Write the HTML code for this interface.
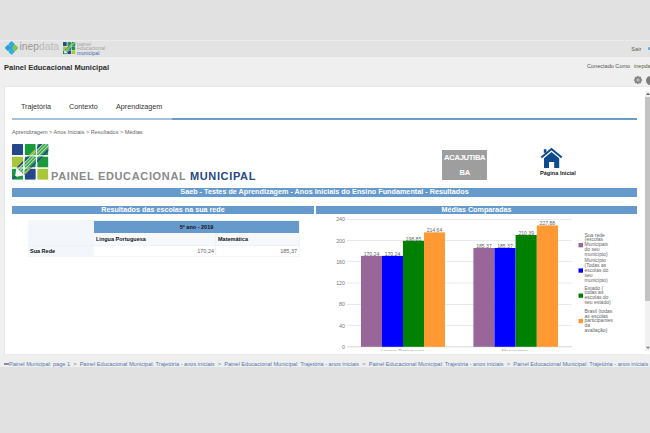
<!DOCTYPE html>
<html><head><meta charset="utf-8">
<style>
*{margin:0;padding:0;box-sizing:border-box}
html,body{width:650px;height:433px;overflow:hidden;background:#e1e1e1;font-family:"Liberation Sans",sans-serif;position:relative}
.abs{position:absolute}
.t{position:absolute;white-space:nowrap;line-height:1}
#topline{left:0;top:40px;width:650px;height:1px;background:#ececec}
#hdr{left:0;top:41px;width:650px;height:16px;background:#e3e3e3}
#title{left:0;top:57px;width:650px;height:310px;background:#efefef}
#titleb{display:none}
#content{left:3.8px;top:85.8px;width:648px;height:269px;background:#fff;border-left:1.2px solid #e4e8ed;border-top:1.2px solid #e4e8ed}
#bottom{left:0;top:354px;width:650px;height:13px;background:#efefef;overflow:hidden}
.bar{position:absolute;background:#6699cc;color:#fff;font-weight:bold;text-align:center;white-space:nowrap;overflow:hidden}
</style></head><body>
<div class="abs" id="topline"></div>
<div class="abs" id="hdr"></div>
<div class="abs" id="title"></div>
<div class="abs" id="titleb"></div>
<div class="abs" id="content"></div>
<div class="abs" id="bottom"></div>

<!-- header logos -->
<svg class="abs" style="left:0;top:36px" width="24" height="24" viewBox="0 0 24 24">
  <g transform="rotate(45 11.6 11.9)">
    <rect x="9" y="9" width="5" height="5" fill="#2ea9dd"/>
    <rect x="6.6" y="6.9" width="4.9" height="4.9" rx="0.9" fill="#2ea9dd"/>
    <rect x="11.7" y="12" width="4.9" height="4.9" rx="0.9" fill="#31aee2"/>
    <rect x="6.6" y="12" width="4.9" height="4.9" rx="0.9" fill="#28a3d8"/>
    <rect x="11.7" y="6.9" width="4.9" height="4.9" rx="0.9" fill="#80c548"/>
  </g>
</svg>
<div class="t" style="left:19.5px;top:41.5px;font-size:10.2px;color:#969696;letter-spacing:0.05px">inep<span style="color:#bababa">data</span></div>
<svg class="abs" style="left:63px;top:42px" width="12.7" height="12.5" viewBox="0 0 37 36">
  <defs>
    <pattern id="st2" width="2.4" height="2.4" patternUnits="userSpaceOnUse" patternTransform="rotate(45)">
      <rect width="2.4" height="2.4" fill="#2a9f46"/><rect width="1" height="2.4" fill="#c5e6bd"/>
    </pattern>
    <clipPath id="cells2">
      <rect x="0" y="0" width="11.2" height="11.2" rx="1"/><rect x="12.6" y="0" width="11.2" height="11.2" rx="1"/><rect x="25.2" y="0" width="11.2" height="11.2" rx="1"/>
      <rect x="0" y="12.4" width="11.2" height="11.2" rx="1"/><rect x="12.6" y="12.4" width="11.2" height="11.2" rx="1"/><rect x="25.2" y="12.4" width="11.2" height="11.2" rx="1"/>
      <rect x="0" y="24.6" width="11.2" height="11.2" rx="1"/><rect x="12.6" y="24.6" width="11.2" height="11.2" rx="1"/><rect x="25.2" y="24.6" width="11.2" height="11.2" rx="1"/>
    </clipPath>
    <clipPath id="c12b"><rect x="12.6" y="0" width="11.2" height="11.2"/></clipPath>
    <clipPath id="c32b"><rect x="12.6" y="24.6" width="11.2" height="11.2"/></clipPath>
  </defs>
  <g clip-path="url(#cells2)">
    <rect x="0" y="0" width="11.2" height="11.2" fill="#26468a"/>
    <rect x="12.6" y="0" width="11.2" height="11.2" fill="#1a9a3c"/>
    <rect x="25.2" y="0" width="11.2" height="11.2" fill="#1a9a3c"/>
    <rect x="0" y="12.4" width="11.2" height="11.2" fill="#a8c83a"/>
    <rect x="12.6" y="12.4" width="11.2" height="11.2" fill="#1a9a3c"/>
    <rect x="25.2" y="12.4" width="11.2" height="11.2" fill="#1a9a3c"/>
    <rect x="0" y="24.6" width="11.2" height="11.2" fill="#1a9a3c"/>
    <rect x="12.6" y="24.6" width="11.2" height="11.2" fill="#26468a"/>
    <rect x="25.2" y="24.6" width="11.2" height="11.2" fill="#a8c83a"/>
    <polygon points="28,0 30.5,0 5.75,24.75 4.5,23.5" fill="#26468a"/>
    <polygon points="30.5,0 37,0 37,4 11,30 5.75,24.75" fill="url(#st2)"/>
    <polygon points="37,4 37,6.5 12.25,31.25 11,30" fill="#26468a"/>
    <g clip-path="url(#c12b)"><polygon points="28,0 30.5,0 5.75,24.75 4.5,23.5" fill="#a8c83a"/></g>
    <g clip-path="url(#c32b)"><polygon points="37,4 37,6.5 12.25,31.25 11,30" fill="#a8c83a"/></g>
    <polygon points="4.5,23.5 12.25,31.25 3,33" fill="#fff"/>
    <polygon points="0.5,35.5 2,31.5 5,33" fill="#26468a"/>
  </g>
</svg>
<div class="t" style="left:77px;top:41.5px;font-size:5.3px;line-height:4.6px;color:#a3a3a3">painel<br>educacional<br><span style="color:#3d6ab2">municipal</span></div>
<div class="t" style="left:631.3px;top:46.5px;font-size:5.6px;color:#5a5a5a">Sair</div>
<div class="abs" style="left:647.7px;top:46.7px;width:4px;height:3.8px;background:#5aa0ea;border-radius:1.5px"></div>

<div class="t" style="left:4px;top:63.5px;font-size:7.5px;font-weight:bold;color:#2d2d2d">Painel Educacional Municipal</div>
<div class="t" style="left:587px;top:63.5px;font-size:5.55px;color:#555">Conectado Como</div>
<div class="t" style="left:634px;top:63.5px;font-size:5.55px;color:#5d5d4a">inepdata</div>
<!-- gear -->
<svg class="abs" style="left:632.5px;top:75px" width="10" height="10" viewBox="0 0 10 10">
  <g fill="#858585"><circle cx="5" cy="5" r="3.5"/>
  <rect x="4.3" y="0.9" width="1.4" height="8.2"/><rect x="0.9" y="4.3" width="8.2" height="1.4"/>
  <rect x="4.3" y="0.9" width="1.4" height="8.2" transform="rotate(45 5 5)"/><rect x="4.3" y="0.9" width="1.4" height="8.2" transform="rotate(-45 5 5)"/></g>
  <circle cx="5" cy="5" r="1.7" fill="#b8b8b8"/>
</svg>
<div class="abs" style="left:646px;top:75.5px;width:9px;height:9px;border-radius:50%;background:#7d7d7d"></div>

<!-- scrollbar -->
<div class="abs" style="left:645px;top:91px;width:5px;height:259.5px;background:#f1f1f1"></div>
<div class="abs" style="left:645px;top:97px;width:5px;height:203.5px;background:#c3c3c3"></div>

<svg class="abs" style="left:646px;top:92px" width="4" height="4"><polygon points="0,3 2,0.8 4,3" fill="#666"/></svg>
<svg class="abs" style="left:646px;top:346px" width="4" height="4"><polygon points="0,0.8 2,3 4,0.8" fill="#777"/></svg>
<!-- tabs -->
<div class="t" style="left:21px;top:102.5px;font-size:7.2px;color:#333">Trajetória</div>
<div class="t" style="left:69px;top:102.5px;font-size:7.2px;color:#333">Contexto</div>
<div class="t" style="left:116px;top:102.5px;font-size:7.2px;color:#333">Aprendizagem</div>
<div class="abs" style="left:12px;top:118.2px;width:160px;height:2.3px;background:#a6c2db"></div>
<div class="abs" style="left:172px;top:118.2px;width:465px;height:2.3px;background:#6a9dcc"></div>
<div class="t" style="left:12px;top:130px;font-size:5.53px;color:#666">Aprendizagem &gt; Anos Iniciais &gt; Resultados &gt; Médias</div>

<!-- big logo -->
<svg class="abs" style="left:12px;top:144px" width="37" height="36" viewBox="0 0 37 36">
  <defs>
    <pattern id="st" width="2.4" height="2.4" patternUnits="userSpaceOnUse" patternTransform="rotate(45)">
      <rect width="2.4" height="2.4" fill="#2a9f46"/><rect width="1" height="2.4" fill="#c5e6bd"/>
    </pattern>
    <clipPath id="cells">
      <rect x="0" y="0" width="11.2" height="11.2" rx="1"/><rect x="12.6" y="0" width="11.2" height="11.2" rx="1"/><rect x="25.2" y="0" width="11.2" height="11.2" rx="1"/>
      <rect x="0" y="12.4" width="11.2" height="11.2" rx="1"/><rect x="12.6" y="12.4" width="11.2" height="11.2" rx="1"/><rect x="25.2" y="12.4" width="11.2" height="11.2" rx="1"/>
      <rect x="0" y="24.6" width="11.2" height="11.2" rx="1"/><rect x="12.6" y="24.6" width="11.2" height="11.2" rx="1"/><rect x="25.2" y="24.6" width="11.2" height="11.2" rx="1"/>
    </clipPath>
    <clipPath id="c12"><rect x="12.6" y="0" width="11.2" height="11.2"/></clipPath>
    <clipPath id="c32"><rect x="12.6" y="24.6" width="11.2" height="11.2"/></clipPath>
  </defs>
  <g clip-path="url(#cells)">
    <rect x="0" y="0" width="11.2" height="11.2" fill="#26468a"/>
    <rect x="12.6" y="0" width="11.2" height="11.2" fill="#1a9a3c"/>
    <rect x="25.2" y="0" width="11.2" height="11.2" fill="#1a9a3c"/>
    <rect x="0" y="12.4" width="11.2" height="11.2" fill="#a8c83a"/>
    <rect x="12.6" y="12.4" width="11.2" height="11.2" fill="#1a9a3c"/>
    <rect x="25.2" y="12.4" width="11.2" height="11.2" fill="#1a9a3c"/>
    <rect x="0" y="24.6" width="11.2" height="11.2" fill="#1a9a3c"/>
    <rect x="12.6" y="24.6" width="11.2" height="11.2" fill="#26468a"/>
    <rect x="25.2" y="24.6" width="11.2" height="11.2" fill="#a8c83a"/>
    <polygon points="28,0 30.5,0 5.75,24.75 4.5,23.5" fill="#26468a"/>
    <polygon points="30.5,0 37,0 37,4 11,30 5.75,24.75" fill="url(#st)"/>
    <polygon points="37,4 37,6.5 12.25,31.25 11,30" fill="#26468a"/>
    <g clip-path="url(#c12)"><polygon points="28,0 30.5,0 5.75,24.75 4.5,23.5" fill="#a8c83a"/></g>
    <g clip-path="url(#c32)"><polygon points="37,4 37,6.5 12.25,31.25 11,30" fill="#a8c83a"/></g>
    <polygon points="4.5,23.5 12.25,31.25 3,33" fill="#fff"/>
    <polygon points="0.5,35.5 2,31.5 5,33" fill="#26468a"/>
  </g>
</svg>
<div class="t" style="left:51px;top:170.5px;font-size:11px;font-weight:bold;color:#8a8a8a;letter-spacing:0.65px">PAINEL EDUCACIONAL <span style="color:#284886">MUNICIPAL</span></div>

<!-- city box -->
<div class="abs" style="left:442px;top:150px;width:45px;height:29.5px;background:#9e9e9e"></div>
<div class="t" style="left:442.2px;top:154px;width:45px;text-align:center;font-size:7.6px;font-weight:bold;color:#fff;letter-spacing:-0.3px">ACAJUTIBA</div>
<div class="t" style="left:442.2px;top:168.9px;width:45px;text-align:center;font-size:7.6px;font-weight:bold;color:#fff;letter-spacing:-0.3px">BA</div>

<!-- home -->
<svg class="abs" style="left:540px;top:147px" width="24" height="22" viewBox="0 0 24 22">
  <polyline points="1.3,10.6 11.5,2.1 21.7,10.6" fill="none" stroke="#0d4a8f" stroke-width="2"/>
  <rect x="3.8" y="2.2" width="2.6" height="3.6" fill="#0d4a8f"/>
  <polygon points="4,11.2 11.5,5 19.2,11.2 19.2,21 14.2,21 14.2,15 9,15 9,21 4,21" fill="#0d4a8f"/>
</svg>
<div class="t" style="left:540px;top:171px;font-size:5.6px;font-weight:bold;color:#222">Página Inicial</div>

<!-- blue bars -->
<div class="bar" style="left:12px;top:188.2px;width:625px;height:8.4px;font-size:7.24px;line-height:8.4px">Saeb - Testes de Aprendizagem - Anos Iniciais do Ensino Fundamental - Resultados</div>
<div class="bar" style="left:12px;top:205.5px;width:302px;height:8.5px;font-size:7.2px;line-height:8.5px">Resultados das escolas na sua rede</div>
<div class="bar" style="left:316px;top:205.5px;width:321px;height:8.5px;font-size:7.2px;line-height:8.5px">Médias Comparadas</div>

<!-- table -->
<div class="abs" style="left:28px;top:220px;width:271.5px;height:36.8px;background:#f3f6fa"></div>
<div class="abs" style="left:93.5px;top:221px;width:205.5px;height:11.5px;background:#6699cc"></div>
<div class="abs" style="left:93.5px;top:233px;width:205.5px;height:11.5px;background:#f6f8fb"></div>
<div class="abs" style="left:93.5px;top:245.5px;width:205.5px;height:10.8px;background:#fff"></div>
<div class="abs" style="left:28px;top:244.5px;width:272px;height:1px;background:#eef1f5"></div>
<div class="abs" style="left:215px;top:233px;width:1px;height:24px;background:#eef1f5"></div>
<div class="t" style="left:93.5px;top:224.5px;width:206px;text-align:center;font-size:5.5px;font-weight:bold;color:#111">5º ano - 2019</div>
<div class="t" style="left:96px;top:237px;font-size:5.5px;font-weight:bold;color:#111">Lingua Portuguesa</div>
<div class="t" style="left:218px;top:237px;font-size:5.5px;font-weight:bold;color:#111">Matemática</div>
<div class="t" style="left:30px;top:249px;font-size:5.5px;font-weight:bold;color:#111">Sua Rede</div>
<div class="t" style="left:150px;top:249px;width:64px;text-align:right;font-size:5.5px;color:#666">170,24</div>
<div class="t" style="left:230px;top:249px;width:67px;text-align:right;font-size:5.5px;color:#666">185,37</div>

<!-- chart -->
<svg class="abs" style="left:0;top:0" width="650" height="433" viewBox="0 0 650 433">
  <g stroke="#e6eaef" stroke-width="1">
    <line x1="347" y1="219.5" x2="572" y2="219.5"/>
    <line x1="347" y1="240.5" x2="572" y2="240.5"/>
    <line x1="347" y1="261.5" x2="572" y2="261.5"/>
    <line x1="347" y1="283" x2="572" y2="283"/>
    <line x1="347" y1="304.5" x2="572" y2="304.5"/>
    <line x1="347" y1="325.5" x2="572" y2="325.5"/>
  </g>
  <line x1="347" y1="346.8" x2="572" y2="346.8" stroke="#d8d8d8" stroke-width="1"/>
  <g font-family="Liberation Sans" font-size="5.3" fill="#777" text-anchor="end">
    <text x="345" y="221.3">240</text>
    <text x="345" y="242.5">200</text>
    <text x="345" y="263.7">160</text>
    <text x="345" y="285">120</text>
    <text x="345" y="306.2">80</text>
    <text x="345" y="327.5">40</text>
    <text x="345" y="348.7">0</text>
  </g>
  <rect x="361" y="255.9" width="21" height="90.9" fill="#996699"/>
  <rect x="382" y="255.9" width="21" height="90.9" fill="#0000ff"/>
  <rect x="403" y="240.8" width="21" height="106" fill="#008000"/>
  <rect x="424" y="232.4" width="21" height="114.4" fill="#ff9933"/>
  <rect x="473.4" y="248" width="21.1" height="98.8" fill="#996699"/>
  <rect x="494.5" y="248" width="21.1" height="98.8" fill="#0000ff"/>
  <rect x="515.6" y="235" width="21.2" height="111.8" fill="#008000"/>
  <rect x="536.8" y="225.4" width="21.2" height="121.4" fill="#ff9933"/>
  <g font-family="Liberation Sans" font-size="5.1" fill="#666" text-anchor="middle">
    <text x="371.5" y="255.7">170,24</text>
    <text x="392.5" y="255.7">170,24</text>
    <text x="413.5" y="240.6">198,85</text>
    <text x="434.5" y="232.2">214,64</text>
    <text x="484" y="247.8">185,37</text>
    <text x="505" y="247.8">185,37</text>
    <text x="526.2" y="234.8">210,39</text>
    <text x="547.4" y="225.2">227,88</text>
  </g>
  <g font-family="Liberation Sans" font-size="5.1" fill="#999" text-anchor="middle">
    <text x="402.8" y="352.9">Língua Portuguesa</text>
    <text x="515" y="352.9">Matemática</text>
  </g>
  <rect x="578.5" y="243" width="4.5" height="4.3" fill="#996699"/>
  <rect x="578.5" y="268.4" width="4.5" height="4.3" fill="#0000ff"/>
  <rect x="578.5" y="293.5" width="4.5" height="4.3" fill="#008000"/>
  <rect x="578.5" y="318.9" width="4.5" height="4.3" fill="#ff9933"/>
  <g font-family="Liberation Sans" font-size="5" fill="#666">
    <text x="584.5" y="236.5">Sua rede</text>
    <text x="584.5" y="241.4">(escolas</text>
    <text x="584.5" y="246.3">Municipais</text>
    <text x="584.5" y="251.2">do seu</text>
    <text x="584.5" y="256.1">município)</text>
    <text x="584.5" y="262">Município</text>
    <text x="584.5" y="266.9">(Todas as</text>
    <text x="584.5" y="271.8">escolas do</text>
    <text x="584.5" y="276.7">seu</text>
    <text x="584.5" y="281.6">município)</text>
    <text x="584.5" y="289.5">Estado (</text>
    <text x="584.5" y="294.4">todas as</text>
    <text x="584.5" y="299.3">escolas do</text>
    <text x="584.5" y="304.2">seu estado)</text>
    <text x="584.5" y="312.6">Brasil (todas</text>
    <text x="584.5" y="317.5">as escolas</text>
    <text x="584.5" y="322.4">participantes</text>
    <text x="584.5" y="327.3">da</text>
    <text x="584.5" y="332.2">avaliação)</text>
  </g>
</svg>
<div class="abs" style="left:340px;top:351px;width:240px;height:3px;background:#fff"></div>
<!-- redraw bottom band over chart overflow -->
<div class="abs" style="left:0;top:354px;width:650px;height:13px;background:#efefef"></div>
<div class="abs" style="left:4px;top:354px;width:641px;height:1px;background:#e6e9ee"></div>

<div class="abs" style="left:4px;top:363px;width:5px;height:2px;background:#8a8f99"></div>
<div class="t" style="left:9px;top:361.5px;font-size:5.61px;color:#5079ad">Painel Municipal: page 1 &nbsp;&gt;&nbsp; Painel Educacional Municipal: Trajetória - anos iniciais &nbsp;&gt;&nbsp; Painel Educacional Municipal: Trajetória - anos iniciais &nbsp;&gt;&nbsp; Painel Educacional Municipal: Trajetória - anos iniciais &nbsp;&gt;&nbsp; Painel Educacional Municipal: Trajetória - anos iniciais</div>
</body></html>
